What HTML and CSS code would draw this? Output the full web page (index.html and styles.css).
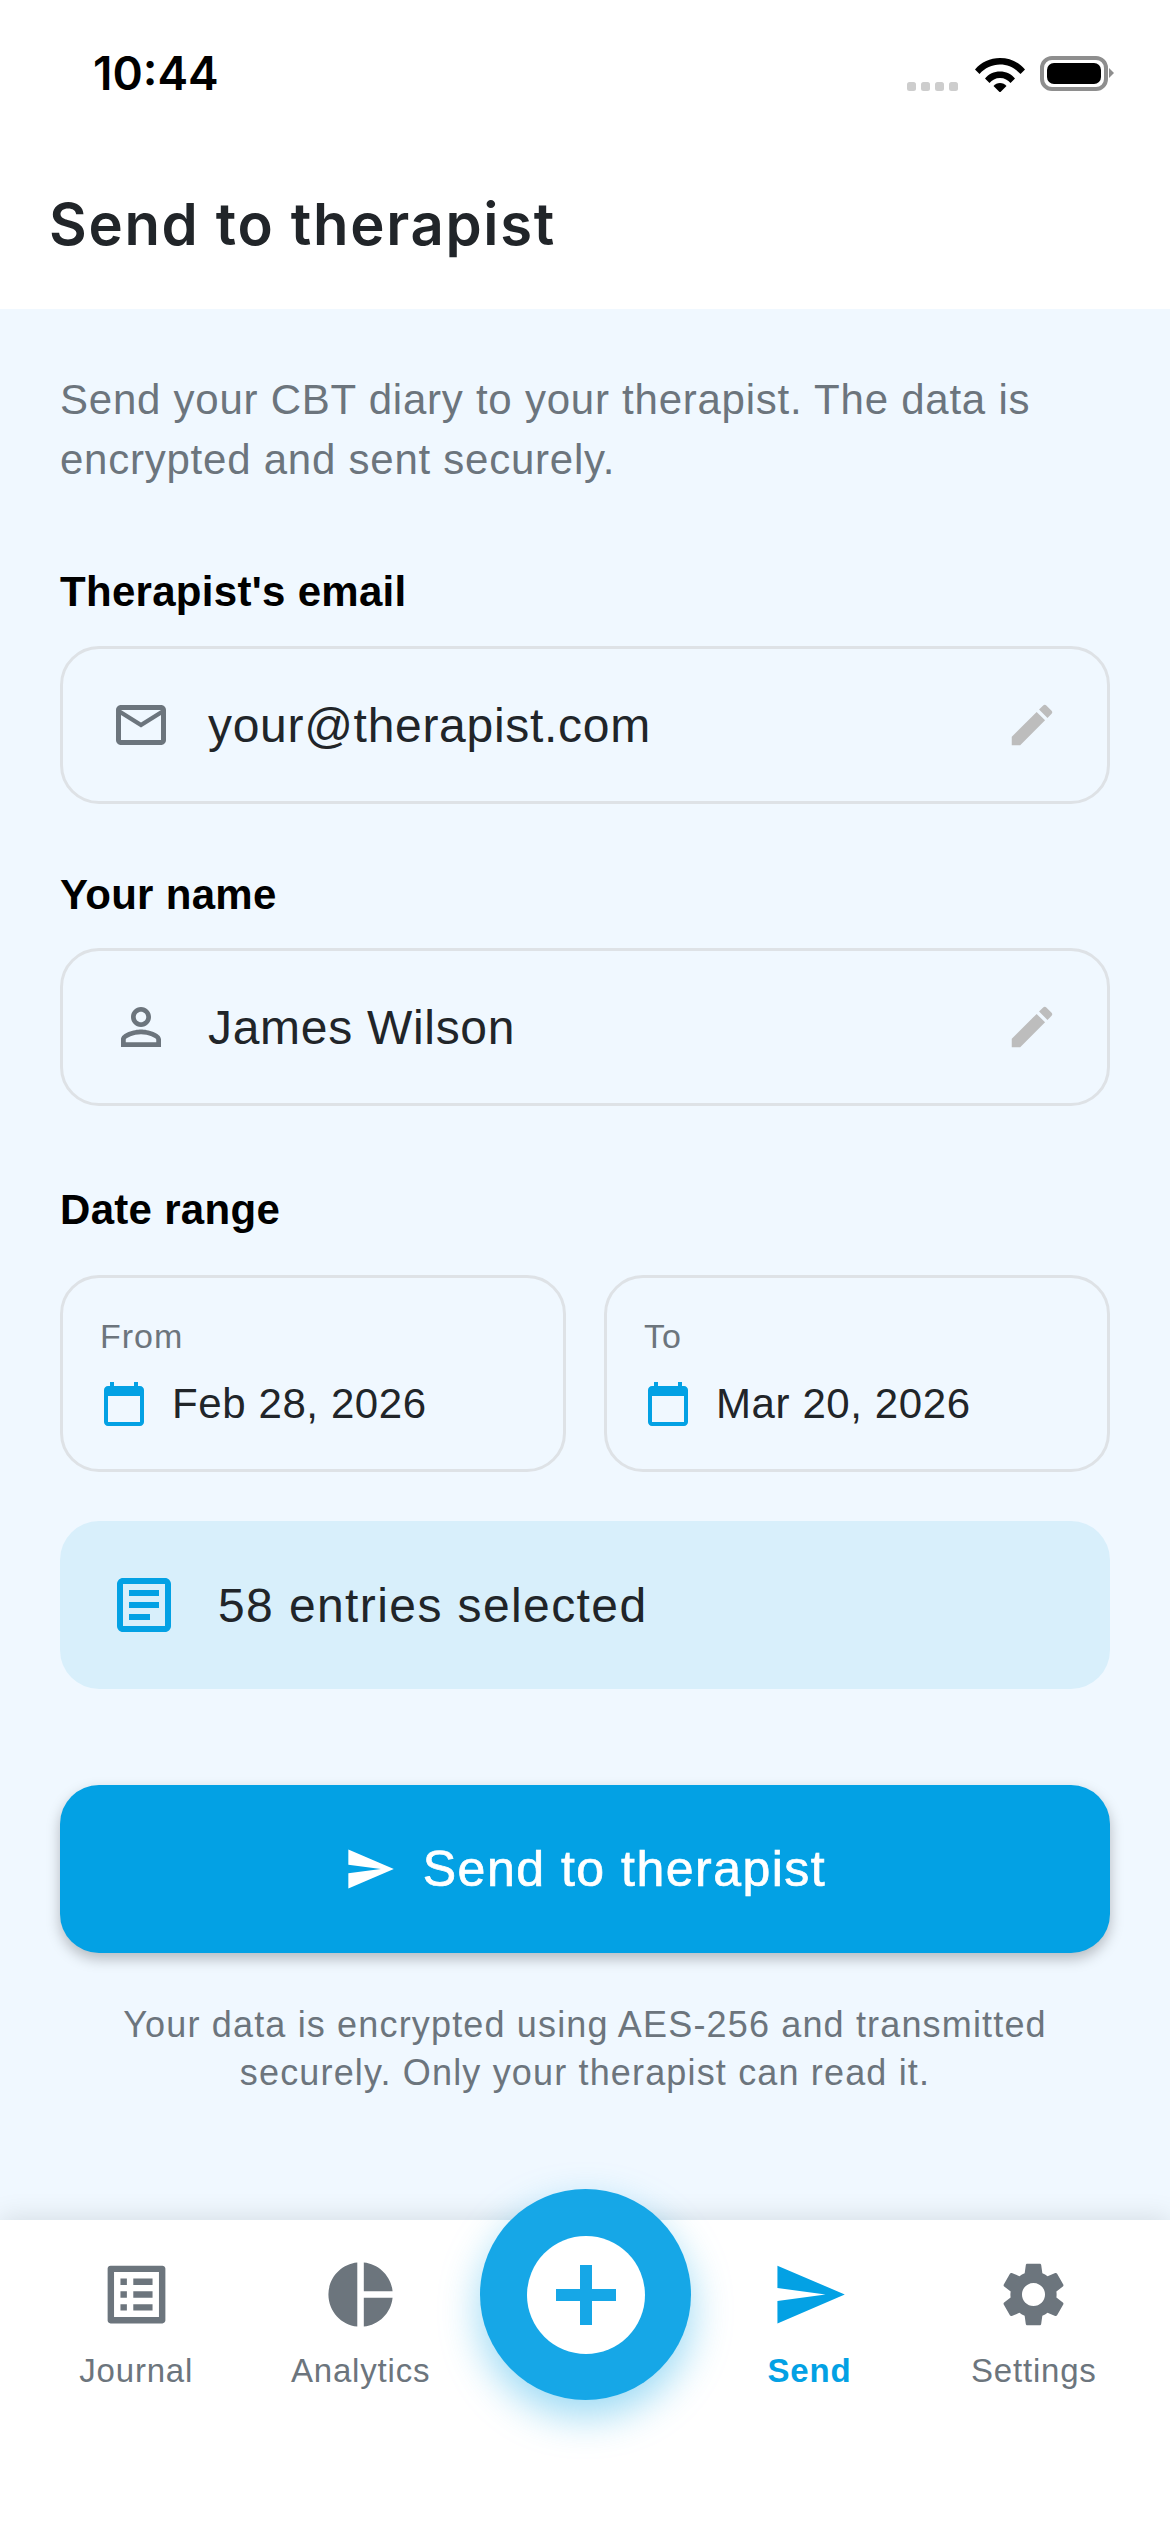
FILE: index.html
```html
<!DOCTYPE html>
<html lang="en">
<head>
<meta charset="utf-8">
<title>Send to therapist</title>
<link rel="stylesheet" href="styles.css">
</head>
<body>
<div class="screen">
  <header class="top">
    <div class="status">
      <span class="time">10:44</span>
      <div class="status-icons">
        <div class="signal"><i></i><i></i><i></i><i></i></div>
        <svg class="wifi" viewBox="0 0 50 36"><path d="M0 13.500C6.500 6 15 2 25 2s18.500 4 25 11.500l-4.500 4.500C40 12 33 8.500 25 8.500S10 12 4.500 18z"/><path d="M10 22.500C13.500 18 19 15.500 25 15.500s11.500 2.500 15 7l-4.500 4.500C33 24 29.500 22 25 22s-8 2-10.500 5z"/><path d="M18.500 30c1.500-1.800 4-3 6.500-3s5 1.200 6.500 3L25 36.500z"/></svg>
        <div class="battery"><div class="battery-fill"></div></div>
      </div>
    </div>
    <h1 class="title">Send to therapist</h1>
  </header>

  <main class="content">
    <p class="intro">Send your CBT diary to your therapist. The data is encrypted and sent securely.</p>

    <div class="label label-first">Therapist's email</div>
    <div class="field">
      <svg class="field-icon" viewBox="0 0 24 24"><path d="M20 4H4c-1.100 0-1.990.9-1.990 2L2 18c0 1.100.9 2 2 2h16c1.100 0 2-.9 2-2V6c0-1.100-.9-2-2-2zm0 14H4V8l8 5 8-5v10zm-8-7L4 6h16l-8 5z"/></svg>
      <span class="field-text">your@therapist.com</span>
      <svg class="edit-icon" viewBox="0 0 24 24"><path d="M3 17.250V21h3.750L17.810 9.940l-3.750-3.750L3 17.250zM20.710 7.040c.39-.39.39-1.020 0-1.410l-2.340-2.340c-.39-.39-1.020-.39-1.410 0l-1.830 1.830 3.750 3.750 1.830-1.830z"/></svg>
    </div>

    <div class="label label-name">Your name</div>
    <div class="field">
      <svg class="field-icon" viewBox="0 0 24 24"><path d="M12 5.900c1.160 0 2.100.94 2.100 2.100s-.94 2.100-2.100 2.100S9.900 9.160 9.900 8s.94-2.100 2.100-2.100m0 9c2.970 0 6.100 1.460 6.100 2.100v1.100H5.900V17c0-.64 3.130-2.100 6.100-2.100M12 4C9.790 4 8 5.790 8 8s1.790 4 4 4 4-1.790 4-4-1.790-4-4-4zm0 9c-2.670 0-8 1.340-8 4v3h16v-3c0-2.660-5.330-4-8-4z"/></svg>
      <span class="field-text">James Wilson</span>
      <svg class="edit-icon" viewBox="0 0 24 24"><path d="M3 17.250V21h3.750L17.810 9.940l-3.750-3.750L3 17.250zM20.710 7.040c.39-.39.39-1.020 0-1.410l-2.340-2.340c-.39-.39-1.020-.39-1.410 0l-1.830 1.830 3.750 3.750 1.830-1.830z"/></svg>
    </div>

    <div class="label label-date">Date range</div>
    <div class="dates">
      <div class="date-card">
        <div class="date-caption">From</div>
        <div class="date-row">
          <svg class="cal-icon" viewBox="0 0 24 24"><path d="M20 3h-1V1h-2v2H7V1H5v2H4c-1.100 0-2 .9-2 2v16c0 1.100.9 2 2 2h16c1.100 0 2-.9 2-2V5c0-1.100-.9-2-2-2zm0 18H4V8h16v13z"/></svg>
          <span class="date-value">Feb 28, 2026</span>
        </div>
      </div>
      <div class="date-card">
        <div class="date-caption">To</div>
        <div class="date-row">
          <svg class="cal-icon" viewBox="0 0 24 24"><path d="M20 3h-1V1h-2v2H7V1H5v2H4c-1.100 0-2 .9-2 2v16c0 1.100.9 2 2 2h16c1.100 0 2-.9 2-2V5c0-1.100-.9-2-2-2zm0 18H4V8h16v13z"/></svg>
          <span class="date-value">Mar 20, 2026</span>
        </div>
      </div>
    </div>

    <div class="banner">
      <svg class="doc-icon" viewBox="0 0 24 24"><path d="M19 5v14H5V5h14m0-2H5c-1.100 0-2 .9-2 2v14c0 1.100.9 2 2 2h14c1.100 0 2-.9 2-2V5c0-1.100-.9-2-2-2z"/><path d="M14 17H7v-2h7v2zm3-4H7v-2h10v2zm0-4H7V7h10v2z"/></svg>
      <span class="banner-text">58 entries selected</span>
    </div>

    <div class="send-btn">
      <svg class="btn-icon" viewBox="0 0 24 24"><path d="M2.010 21L23 12 2.010 3 2 10l15 2-15 2z"/></svg>
      <span>Send to therapist</span>
    </div>

    <p class="note">Your data is encrypted using AES-256 and transmitted securely. Only your therapist can read it.</p>
  </main>

  <nav class="tabs">
    <div class="tab">
      <svg class="tab-icon" viewBox="0 0 24 24"><path d="M19 5v14H5V5h14m1.100-2H3.900c-.5 0-.9.4-.9.9v16.200c0 .4.4.9.9.9h16.200c.4 0 .9-.5.9-.9V3.900c0-.5-.5-.9-.9-.9zM11 7h6v2h-6V7zm0 4h6v2h-6v-2zm0 4h6v2h-6zM7 7h2v2H7zm0 4h2v2H7zm0 4h2v2H7z"/></svg>
      <span class="tab-label">Journal</span>
    </div>
    <div class="tab">
      <svg class="tab-icon" viewBox="0 0 24 24"><path d="M11 2v20c-5.070-.5-9-4.790-9-10s3.930-9.500 9-10zm2.030 0v8.990H22c-.47-4.740-4.240-8.520-8.970-8.990zm0 11.010V22c4.740-.47 8.500-4.250 8.970-8.990h-8.970z"/></svg>
      <span class="tab-label">Analytics</span>
    </div>
    <div class="tab tab-spacer"></div>
    <div class="tab tab-active">
      <svg class="tab-icon" viewBox="0 0 24 24"><path d="M2.010 21L23 12 2.010 3 2 10l15 2-15 2z"/></svg>
      <span class="tab-label">Send</span>
    </div>
    <div class="tab">
      <svg class="tab-icon" viewBox="0 0 24 24"><path d="M19.140 12.940c.04-.3.06-.61.06-.94 0-.32-.02-.64-.07-.94l2.030-1.580c.18-.14.23-.41.12-.61l-1.920-3.320c-.12-.22-.37-.29-.59-.22l-2.390.96c-.5-.38-1.030-.7-1.620-.94l-.36-2.540c-.04-.24-.24-.41-.48-.41h-3.840c-.24 0-.43.17-.47.41l-.36 2.540c-.59.24-1.130.57-1.620.94l-2.390-.96c-.22-.08-.47 0-.59.22L2.740 8.870c-.12.21-.08.47.12.61l2.030 1.580c-.05.3-.09.63-.09.94s.02.64.07.94l-2.030 1.580c-.18.14-.23.41-.12.61l1.920 3.320c.12.22.37.29.59.22l2.390-.96c.5.38 1.030.7 1.620.94l.36 2.540c.05.24.24.41.48.41h3.840c.24 0 .44-.17.47-.41l.36-2.540c.59-.24 1.130-.56 1.620-.94l2.390.96c.22.08.47 0 .59-.22l1.920-3.320c.12-.22.07-.47-.12-.61l-2.010-1.580zM12 15.600c-1.980 0-3.600-1.620-3.600-3.600s1.620-3.600 3.600-3.600 3.600 1.620 3.600 3.600-1.620 3.600-3.600 3.600z"/></svg>
      <span class="tab-label">Settings</span>
    </div>
    <div class="fab">
      <div class="fab-inner">
        <svg class="fab-plus" viewBox="0 0 60 60"><path d="M24 0h12v24h24v12H36v24H24V36H0V24h24z"/></svg>
      </div>
    </div>
  </nav>
</div>
</body>
</html>
```
FILE: styles.css
```css
* { box-sizing: border-box; }
html, body { margin: 0; padding: 0; }
body { background: #fff; font-family: "Liberation Sans", Arial, sans-serif; }
.screen { width: 1170px; height: 2532px; display: flex; flex-direction: column; overflow: hidden; }

.top { height: 309px; background: #fff; flex: none; }
.status { height: 150px; display: flex; justify-content: space-between; align-items: flex-start; padding: 48px 62px 0 93px; }
.time { font-family: Inter, sans-serif; font-weight: 600; font-size: 46px; line-height: 50px; color: #000; }
.status-icons { display: flex; align-items: flex-start; padding-top: 8px; }
.signal { display: flex; gap: 5px; margin-top: 26px; margin-right: 17px; }
.signal i { display: block; width: 9px; height: 9px; border-radius: 2.500px; background: #cdcdcd; }
.wifi { width: 50px; height: 36px; fill: #000; margin-right: 15px; }
.battery { position: relative; width: 68px; height: 35px; border: 4px solid #8e8e8e; border-radius: 12px; padding: 3px; }
.battery::after { content: ""; position: absolute; right: -10px; top: 8px; width: 0; height: 0; border-left: 5px solid #8e8e8e; border-top: 5px solid transparent; border-bottom: 5px solid transparent; }
.battery-fill { width: 100%; height: 100%; background: #000; border-radius: 7px; }
.title { margin: 37px 0 0; padding-left: 49px; font-family: Inter, sans-serif; font-size: 58px; line-height: 74px; font-weight: 600; color: #212529; letter-spacing: 1.700px; }

.content { flex: 1; background: #f0f8ff; padding: 61px 60px 0; display: flex; flex-direction: column; }
.intro { margin: 0; font-size: 42px; line-height: 60px; color: #6c757d; letter-spacing: 0.760px; }
.label { font-size: 42px; line-height: 48px; font-weight: 700; color: #000; letter-spacing: 0.3px; }
.label-first { margin-top: 78px; margin-bottom: 30px; }
.label-name { margin-top: 67px; margin-bottom: 29px; }
.label-date { margin-top: 80px; margin-bottom: 41px; }

.field { height: 158px; border: 3px solid #dee2e6; border-radius: 39px; display: flex; align-items: center; padding: 0 48px 0 48px; }
.field-icon { width: 60px; height: 60px; fill: #6c757d; flex: none; }
.field-text { flex: 1; margin-left: 37px; font-size: 48px; letter-spacing: 0.7px; color: #212529; }
.edit-icon { width: 54px; height: 54px; fill: #bdbdbd; flex: none; }

.dates { display: grid; grid-template-columns: 506px 506px; gap: 38px; }
.date-card { height: 197px; border: 3px solid #dee2e6; border-radius: 39px; padding: 37px 37px 0; }
.date-caption { font-size: 34px; line-height: 42px; letter-spacing: 1px; color: #6c757d; }
.date-row { display: flex; align-items: center; margin-top: 23px; }
.cal-icon { width: 48px; height: 48px; fill: #03a1e4; flex: none; }
.date-value { margin-left: 24px; font-size: 42px; letter-spacing: 0.6px; color: #212529; }

.banner { height: 168px; margin-top: 49px; background: #d8effb; border-radius: 39px; display: flex; align-items: center; padding-left: 48px; }
.doc-icon { width: 72px; height: 72px; fill: #03a1e4; flex: none; }
.banner-text { margin-left: 38px; font-size: 48px; letter-spacing: 1.400px; line-height: 56px; padding-top: 2px; color: #212529; }

.send-btn { height: 168px; margin-top: 96px; background: #03a1e4; border-radius: 39px; display: flex; align-items: center; justify-content: center; gap: 27px; color: #fff; font-size: 50px; font-weight: 400; letter-spacing: 1.500px; -webkit-text-stroke: 0.7px #fff; box-shadow: 0 6px 14px rgba(0, 0, 0, 0.25); }
.btn-icon { width: 52px; height: 52px; fill: #fff; flex: none; }

.note { margin: 48px 0 0; font-size: 36px; line-height: 48px; text-align: center; letter-spacing: 1.160px; color: #6c757d; padding: 0 30px; }

.tabs { position: relative; flex: none; height: 312px; background: #fff; display: flex; padding: 0 24px; box-shadow: 0 -4px 24px rgba(0, 0, 0, 0.1); }
.tab { flex: 1; display: flex; flex-direction: column; align-items: center; padding-top: 36px; }
.tab-icon { width: 77px; height: 77px; fill: #6c757d; }
.tab-label { margin-top: 17px; font-size: 33px; line-height: 42px; letter-spacing: 0.8px; color: #6c757d; }
.tab-active .tab-icon { fill: #03a1e4; }
.tab-active .tab-label { color: #03a1e4; font-weight: 700; }
.fab { position: absolute; left: 480px; top: -31px; width: 211px; height: 211px; border-radius: 50%; background: #16a7e7; box-shadow: 0 16px 40px rgba(3, 161, 228, 0.4); display: flex; align-items: center; justify-content: center; }
.fab-inner { width: 118px; height: 118px; border-radius: 50%; background: #fff; display: flex; align-items: center; justify-content: center; }
.fab-plus { width: 60px; height: 60px; fill: #16a7e7; }
```
